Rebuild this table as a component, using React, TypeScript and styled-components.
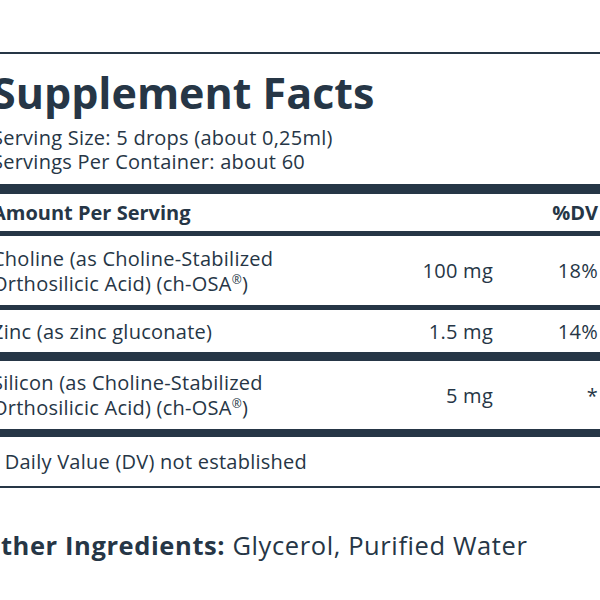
import React from 'react';
import styled, { createGlobalStyle } from 'styled-components';

const ink = '#263646';

const GlobalStyle = createGlobalStyle`
  html, body {
    margin: 0;
    padding: 0;
    background: #ffffff;
    overflow: hidden;
  }
  body {
    font-family: "Open Sans", Lato, sans-serif;
    color: ${ink};
  }
`;

const Page = styled.div`
  width: 600px;
  height: 600px;
  overflow: hidden;
  padding-top: 52px;
  box-sizing: border-box;
`;

const Label = styled.section`
  width: 640px;
  margin-left: -8px;
  border-top: 2px solid ${ink};
  border-bottom: 2px solid ${ink};
`;

const Title = styled.h1`
  margin: 0;
  padding-top: 15px;
  font-size: 43px;
  line-height: 48px;
  font-weight: 700;
`;

const Serving = styled.div`
  font-size: 20px;
  letter-spacing: 0.25px;
  line-height: 24px;
  padding-top: 9px;
  padding-bottom: 10px;
  border-bottom: 10px solid ${ink};
`;

const Row = styled.div<{ $rule: number; $height: number }>`
  display: grid;
  grid-template-columns: 1fr 120px 105px;
  align-items: center;
  height: ${(p) => p.$height}px;
  border-bottom: ${(p) => p.$rule}px solid ${ink};
  padding-right: 34px;
  font-size: 20px;
  line-height: 25px;
`;

const Name = styled.div<{ $bold?: boolean }>`
  font-weight: ${(p) => (p.$bold ? 700 : 400)};
  letter-spacing: ${(p) => (p.$bold ? 0 : 0.25)}px;
`;

const Amount = styled.div<{ $bold?: boolean }>`
  text-align: right;
  font-weight: ${(p) => (p.$bold ? 700 : 400)};
  letter-spacing: ${(p) => (p.$bold ? 0 : 0.25)}px;
`;

const Reg = styled.sup`
  font-size: 12px;
  vertical-align: 7px;
  line-height: 0;
`;

const Note = styled.div`
  height: 49px;
  display: flex;
  align-items: center;
  margin-left: -4px;
  font-size: 20px;
  letter-spacing: 0.25px;
`;

const Other = styled.p`
  margin: 42px 0 0 -20px;
  font-size: 25.5px;
  letter-spacing: 0.6px;
  line-height: 30px;
`;

const OtherLabel = styled.strong`
  font-weight: 700;
`;

type Nutrient = {
  name: React.ReactNode;
  amount: string;
  dv: string;
  rule: number;
  height: number;
};

const osa = (
  <>
    Orthosilicic Acid) (ch-OSA<Reg>®</Reg>)
  </>
);

const nutrients: Nutrient[] = [
  {
    name: (
      <>
        Choline (as Choline-Stabilized
        <br />
        {osa}
      </>
    ),
    amount: '100 mg',
    dv: '18%',
    rule: 5,
    height: 69,
  },
  { name: 'Zinc (as zinc gluconate)', amount: '1.5 mg', dv: '14%', rule: 9, height: 42 },
  {
    name: (
      <>
        Silicon (as Choline-Stabilized
        <br />
        {osa}
      </>
    ),
    amount: '5 mg',
    dv: '*',
    rule: 8,
    height: 68,
  },
];

export default function App() {
  return (
    <Page>
      <GlobalStyle />
      <Label>
        <Title>Supplement Facts</Title>
        <Serving>
          Serving Size: 5 drops (about 0,25ml)
          <br />
          Servings Per Container: about 60
        </Serving>
        <Row $rule={5} $height={37}>
          <Name $bold>Amount Per Serving</Name>
          <Amount />
          <Amount $bold>%DV</Amount>
        </Row>
        {nutrients.map((n) => (
          <Row key={n.amount} $rule={n.rule} $height={n.height}>
            <Name>{n.name}</Name>
            <Amount>{n.amount}</Amount>
            <Amount>{n.dv}</Amount>
          </Row>
        ))}
        <Note>* Daily Value (DV) not established</Note>
      </Label>
      <Other>
        <OtherLabel>Other Ingredients:</OtherLabel> Glycerol, Purified Water
      </Other>
    </Page>
  );
}
